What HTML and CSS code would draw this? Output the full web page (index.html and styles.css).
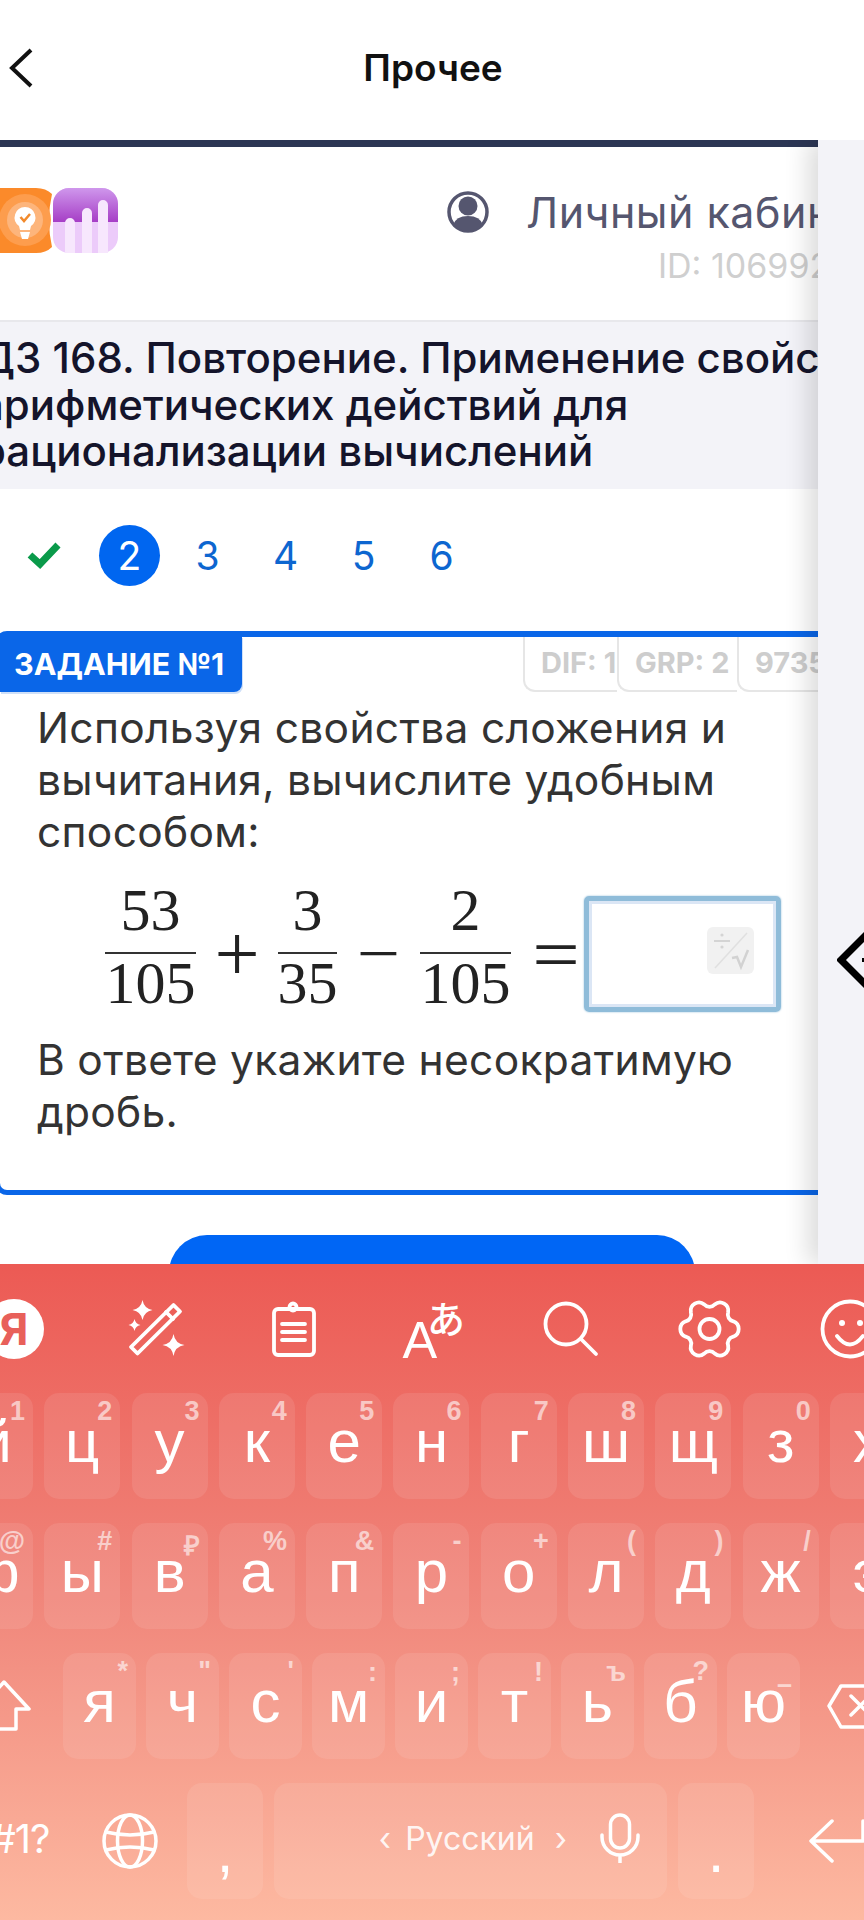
FILE: index.html
```html
<!DOCTYPE HTML>
<html lang="ru">
<head>
<meta charset="utf-8">
<title>Прочее</title>
<link rel="stylesheet" href="styles.css">
</head>
<body>

<div class="topbar">
	<svg class="back" width="32" height="44" viewBox="0 0 32 44"><path d="M29 4 L10 22 L29 40"/></svg>
	<div class="topbar-title">Прочее</div>
</div>

<div class="frame">
	<div class="content">
		<div class="site-head">
			<svg class="logos" width="118" height="65" viewBox="0 0 118 65">
				<defs>
					<linearGradient id="purple" x1="0" y1="0" x2="0" y2="1"><stop offset="0" stop-color="#cf97ec"/><stop offset="1" stop-color="#a63ec6"/></linearGradient>
				</defs>
				<path d="M-14 0 H36 Q46 0 52 6 Q46 32 52 59 Q46 65 36 65 H-14Z" fill="#fb8a2a"/>
				<circle cx="25" cy="32" r="26" fill="#fd9d4d"/>
				<circle cx="25" cy="32" r="18" fill="#fdb57c"/>
				<path d="M25 19 a10.5 10.5 0 0 1 6 19 l-1 4 h-10 l-1 -4 a10.5 10.5 0 0 1 6 -19z" fill="#fff"/>
				<path d="M20 44 h10 l-2 7 h-6z" fill="#fff"/>
				<path d="M20.5 29 l3.5 4 l6 -7" fill="none" stroke="#f28a2c" stroke-width="2.5"/>
				<rect x="53" y="0" width="65" height="65" rx="16" fill="#eccbfa"/>
				<path d="M53 34 V16 a16 16 0 0 1 16 -16 h33 a16 16 0 0 1 16 16 V34Z" fill="url(#purple)"/>
				<path d="M65 65 V35 a5 5 0 0 1 10 0 V65Z M82 65 V25 a5 5 0 0 1 10 0 V65Z M98 65 V17 a5 5 0 0 1 10 0 V65Z" fill="#f7e7fd"/>
			</svg>
			<div class="account">
				<div class="account-name">
					<svg width="42" height="44" viewBox="0 0 42 44">
						<circle cx="21" cy="22" r="19" fill="none" stroke="#55566f" stroke-width="3.5"/>
						<circle cx="21" cy="16" r="9.5" fill="#55566f"/>
						<path d="M6 35 Q9 26 21 26 Q33 26 36 35 Q29 41 21 41 Q13 41 6 35Z" fill="#55566f"/>
					</svg>
					<span>Личный кабинет</span>
				</div>
				<div class="account-id">ID: 1069925</div>
			</div>
		</div>

		<div class="lesson-title">ДЗ 168. Повторение. Применение свойств<br>арифметических действий для<br>рационализации вычислений</div>

		<div class="steps">
			<svg class="step-done" width="36" height="28" viewBox="0 0 36 28"><path d="M4 14 L14 23 L32 4"/></svg>
			<div class="step current">2</div>
			<div class="step">3</div>
			<div class="step">4</div>
			<div class="step">5</div>
			<div class="step">6</div>
		</div>

		<div class="task">
			<div class="task-head">
				<div class="task-badge">ЗАДАНИЕ №1</div>
				<div class="task-tags">
					<div class="tag tag-dif">DIF: 1</div>
					<div class="tag tag-grp">GRP: 2</div>
					<div class="tag">97351</div>
				</div>
			</div>
			<p class="task-text first">Используя свойства сложения и<br>вычитания, вычислите удобным<br>способом:</p>
			<div class="math">
				<div class="frac wide"><span>53</span><i></i><span>105</span></div>
				<span class="op op-plus">+</span>
				<div class="frac"><span>3</span><i></i><span>35</span></div>
				<span class="op op-minus">−</span>
				<div class="frac wide"><span>2</span><i></i><span>105</span></div>
				<span class="op op-eq">=</span>
				<div class="answer">
					<svg class="answer-icon" width="47" height="47" viewBox="0 0 47 47">
						<rect width="47" height="47" rx="6" fill="#f1f1f1"/>
						<path d="M40 6 L8 41" stroke="#e0e0e0" stroke-width="1.5" fill="none"/>
						<path d="M7 14 H23" stroke="#d4d4d4" stroke-width="2" fill="none"/>
						<circle cx="15" cy="8" r="1.6" fill="#d4d4d4"/>
						<circle cx="15" cy="20" r="1.6" fill="#d4d4d4"/>
						<path d="M25 31 L30 30 L34 40 L41 23" stroke="#d2d2d2" stroke-width="2.5" fill="none"/>
					</svg>
				</div>
			</div>
			<p class="task-text second">В ответе укажите несократимую<br>дробь.</p>
		</div>

		<div class="submit"></div>
	</div>
	<div class="side">
		<svg class="side-arrow" width="27" height="70" viewBox="0 0 27 70"><path d="M31 8 L4 35 L31 62"/><rect x="25" y="33" width="2" height="4"/></svg>
	</div>
</div>

<div class="keyboard">
	<div class="kb-tools">
		<div class="tool-ya">Я</div>
		<svg class="tool" viewBox="-30 -30 60 60">
			<path d="M-16.5 24.5 L26 -17.5 L19.5 -24 L-23 18Z"/>
			<path d="M12 -17 L19 -10"/>
			<path class="solid" d="M-11.5 -29 Q-10 -20.5 -1.5 -19 Q-10 -17.5 -11.5 -9 Q-13 -17.5 -21.5 -19 Q-13 -20.5 -11.5 -29Z"/>
			<path class="solid" d="M-19.5 -10 Q-18.5 -5 -13.5 -4 Q-18.5 -3 -19.5 2 Q-20.5 -3 -25.5 -4 Q-20.5 -5 -19.5 -10Z"/>
			<path class="solid" d="M19.5 5 Q21 14.5 30.5 16 Q21 17.5 19.5 27 Q18 17.5 8.5 16 Q18 14.5 19.5 5Z"/>
		</svg>
		<svg class="tool" viewBox="-30 -30 60 60">
			<rect x="-19" y="-20" width="40" height="46" rx="4"/>
			<circle cx="0" cy="-22" r="3.5"/>
			<path d="M-11 -5 H12 M-11 3 H12 M-11 11 H12"/>
		</svg>
		<svg class="tool" viewBox="-30 -30 60 60">
			<text class="tool-a" x="-30.5" y="29">A</text>
			<text class="tool-kana" x="-6" y="4">あ</text>
		</svg>
		<svg class="tool" viewBox="-30 -30 60 60">
			<circle cx="-6" cy="-5" r="20.5"/>
			<path d="M9 10 L24 25"/>
		</svg>
		<svg class="tool" viewBox="-30 -30 60 60">
			<g transform="translate(-2.5 0)">
				<path d="M23.8 -7.7 A8.2 8.2 0 0 1 23.8 7.7 A7 7 0 0 0 18.6 16.7 A8.2 8.2 0 0 1 5.2 24.5 A7 7 0 0 0 -5.2 24.5 A8.2 8.2 0 0 1 -18.6 16.7 A7 7 0 0 0 -23.8 7.7 A8.2 8.2 0 0 1 -23.8 -7.7 A7 7 0 0 0 -18.6 -16.7 A8.2 8.2 0 0 1 -5.2 -24.5 A7 7 0 0 0 5.2 -24.5 A8.2 8.2 0 0 1 18.6 -16.7 A7 7 0 0 0 23.8 -7.7Z"/>
				<circle r="10"/>
			</g>
		</svg>
		<svg class="tool" viewBox="-30 -30 60 60">
			<circle cx="-1" cy="0" r="27.5"/>
			<circle class="solid" cx="-9" cy="-6" r="3"/>
			<circle class="solid" cx="9" cy="-6" r="3"/>
			<path d="M-14 7 Q-1 24 12 7"/>
		</svg>
	</div>

	<div class="kb-rows">
		<div class="kb-row row-wide">
			<div class="key">й<b>1</b></div>
			<div class="key">ц<b>2</b></div>
			<div class="key">у<b>3</b></div>
			<div class="key">к<b>4</b></div>
			<div class="key">е<b>5</b></div>
			<div class="key">н<b>6</b></div>
			<div class="key">г<b>7</b></div>
			<div class="key">ш<b>8</b></div>
			<div class="key">щ<b>9</b></div>
			<div class="key">з<b>0</b></div>
			<div class="key">х</div>
		</div>
		<div class="kb-row row-wide">
			<div class="key">ф<b>@</b></div>
			<div class="key">ы<b>#</b></div>
			<div class="key">в<b>₽</b></div>
			<div class="key">а<b>%</b></div>
			<div class="key">п<b>&amp;</b></div>
			<div class="key">р<b>-</b></div>
			<div class="key">о<b>+</b></div>
			<div class="key">л<b>(</b></div>
			<div class="key">д<b>)</b></div>
			<div class="key">ж<b>/</b></div>
			<div class="key">э</div>
		</div>
		<div class="kb-row row-narrow">
			<div class="key-plain">
				<svg class="kb-icon" width="73" height="106" viewBox="-20 0 73 106"><path d="M4 29 L29 56 H16 V76 H-8 V56 H-21Z"/></svg>
			</div>
			<div class="key">я<b>*</b></div>
			<div class="key">ч<b>"</b></div>
			<div class="key">с<b>'</b></div>
			<div class="key">м<b class="low">:</b></div>
			<div class="key">и<b class="low">;</b></div>
			<div class="key">т<b class="low">!</b></div>
			<div class="key">ь<b class="low">ъ</b></div>
			<div class="key">б<b>?</b></div>
			<div class="key">ю<b class="lower">–</b></div>
			<div class="key-plain">
				<svg class="kb-icon" width="73" height="106" viewBox="810 1651 73 106"><path d="M829 1704 L841 1684 H890 V1725 H841Z M851 1694 L870 1713 M851 1713 L870 1694"/></svg>
			</div>
		</div>
		<div class="kb-row row-bottom">
			<div class="key-sym">!#1?</div>
			<div class="key-plain key-globe">
				<svg class="kb-icon" width="56" height="56" viewBox="-28 -28 56 56"><circle r="26"/><ellipse rx="12.5" ry="26"/><path d="M-24 -9 Q0 -3 24 -9 M-24 9 Q0 3 24 9"/></svg>
			</div>
			<div class="key key-punct">,</div>
			<div class="key key-space">
				<span class="lang"><em>‹</em>Русский<em>›</em></span>
				<svg class="kb-icon" width="40" height="50" viewBox="0 0 40 50"><rect x="10.5" y="2" width="19" height="33" rx="9.5"/><path d="M2 22 V24 A18 18 0 0 0 38 24 V22 M20 42 V50"/></svg>
			</div>
			<div class="key key-punct">.</div>
			<div class="key-plain key-enter">
				<svg class="kb-icon" width="60" height="44" viewBox="0 0 60 44"><path d="M55 2 V22 H3 M24 2 L3 22 L24 42"/></svg>
			</div>
		</div>
	</div>
</div>

</body>
</html>
```

FILE: styles.css
```css
html, body{
margin: 0;
width: 864px;
height: 1920px;
overflow: hidden;
background: #fff;
font-family: Inter, "Liberation Sans", sans-serif;
}

/* top bar */
.topbar{
height: 140px;
box-sizing: border-box;
display: flex;
align-items: center;
justify-content: center;
}
.back{
flex: none;
margin: -4px 0 0 2px;
fill: none;
stroke: #111;
stroke-width: 4;
}
.topbar-title{
flex: 1;
margin: -5px 0 0 0;
padding-right: 32px;
text-align: center;
font-size: 37px;
font-weight: 600;
color: #111;
}

.frame{
display: flex;
height: 1124px;
}
.content{
width: 818px;
flex: none;
box-sizing: border-box;
overflow: hidden;
border-top: 7px solid #2c3654;
}
.side{
flex: 1;
position: relative;
background: #f3f3f8;
box-shadow: -10px 0 24px rgba(0,0,0,.14);
clip-path: inset(0 0 0 -50px);
padding: 785px 0 0 19px;
}
.side-arrow{
display: block;
fill: none;
stroke: #000;
stroke-width: 7;
}
.side-arrow rect{
fill: #000;
stroke: none;
}

/* site header */
.site-head{
height: 173px;
display: flex;
align-items: flex-start;
white-space: nowrap;
}
.logos{
flex: none;
margin-top: 41px;
}
.account{
flex: none;
display: flex;
flex-direction: column;
align-items: flex-end;
margin: 40px 0 0 329px;
}
.account-name{
display: flex;
align-items: center;
gap: 37px;
height: 50px;
font-size: 43px;
letter-spacing: .5px;
color: #55566f;
}
.account-id{
font-size: 34px;
color: #cfcfcf;
margin: 8px 28px 0 0;
}

.lesson-title{
height: 169px;
box-sizing: border-box;
margin-left: -20px;
padding: 13px 0 0 0;
background: #f3f3f8;
border-top: 2px solid #e8e8ec;
font-size: 42px;
line-height: 46.5px;
font-weight: 500;
color: #14142b;
white-space: nowrap;
}

/* steps */
.steps{
height: 142px;
box-sizing: border-box;
display: flex;
align-items: center;
gap: 17px;
padding: 0 0 10px 26px;
}
.step-done{
flex: none;
fill: none;
stroke: #0a9a4a;
stroke-width: 7;
margin-right: 20px;
}
.step{
flex: none;
width: 61px;
height: 61px;
line-height: 61px;
text-align: center;
border-radius: 50%;
font-size: 39px;
color: #0d66d0;
}
.step.current{
background: #0066f0;
color: #fff;
}

/* task card */
.task{
height: 564px;
box-sizing: border-box;
margin-left: -5px;
border: 6px solid #0a66e8;
border-width: 6px 0 5px 5px;
border-radius: 12px 0 0 12px;
}
.task-head{
display: flex;
height: 55px;
}
.task-badge{
flex: none;
width: 242px;
box-sizing: border-box;
padding-left: 14px;
line-height: 56px;
margin-top: -1px;
background: #0a66e8;
border-radius: 0 0 8px 0;
box-shadow: 1px 2px 0 #cfe0f8;
color: #fff;
font-size: 30.5px;
font-weight: 700;
white-space: nowrap;
}
.task-tags{
display: flex;
margin-left: 281px;
}
.tag{
flex: none;
box-sizing: border-box;
padding-left: 16px;
line-height: 52px;
border: 2px solid #e6e6e6;
border-width: 0 0 2px 2px;
border-radius: 0 0 0 12px;
font-size: 29px;
font-weight: 700;
color: #cdcdcd;
white-space: nowrap;
}
.tag-dif{
width: 94px;
}
.tag-grp{
width: 120px;
}
.task-text{
margin: 0;
padding-left: 37px;
font-size: 42.5px;
letter-spacing: .3px;
line-height: 52px;
color: #333;
white-space: nowrap;
}
.task-text.first{
margin-top: 10px;
}
.task-text.second{
margin-top: 22px;
}

/* formula */
.math{
display: flex;
align-items: center;
height: 116px;
margin-top: 38px;
padding-left: 105px;
font-family: "Liberation Serif", serif;
font-size: 60px;
color: #222;
}
.frac{
flex: none;
width: 59px;
display: flex;
flex-direction: column;
align-items: center;
padding-top: 10px;
}
.frac.wide{
width: 91px;
}
.frac span{
line-height: 60px;
height: 60px;
}
.frac span:first-child{
margin-top: -12px;
height: 48px;
line-height: 36px;
padding-bottom: 12px;
}
.frac span:last-child{
line-height: 58px;
}
.frac i{
display: block;
width: 100%;
height: 2px;
background: #333;
}
.op{
flex: none;
text-align: center;
line-height: 1;
}
.op-plus{
width: 82px;
font-size: 80px;
}
.op-minus{
width: 83px;
font-size: 64px;
transform: scaleX(1.2);
}
.op-eq{
width: 73px;
box-sizing: border-box;
padding-left: 15px;
font-size: 74px;
transform: scaleX(1.14);
}
.answer{
flex: none;
width: 197px;
height: 116px;
box-sizing: border-box;
display: flex;
align-items: center;
justify-content: flex-end;
padding: 0 22px 8px 0;
border: 5px solid #8fbcd9;
border-radius: 5px;
box-shadow: inset 0 0 0 3px #dbe6f5, 0 0 2px #8fbcd9;
}
.answer-icon{
display: block;
}
.submit{
width: 526px;
height: 90px;
margin: 40px 0 0 169px;
background: #0066f5;
border-radius: 38px;
}

/* keyboard */
.keyboard{
height: 656px;
overflow: hidden;
background: linear-gradient(#ec5a54, #f0857a 50%, #fdb9a1);
color: #fff;
}
.kb-tools{
height: 129px;
display: flex;
align-items: center;
gap: 79.5px;
margin-left: -16px;
}
.tool, .tool-ya{
flex: none;
width: 60px;
height: 60px;
}
.tool{
overflow: visible;
fill: none;
stroke: #fff;
stroke-width: 3.8;
stroke-linejoin: round;
stroke-linecap: round;
}
.tool .solid{
fill: #fff;
stroke: none;
}
.tool text{
fill: #fff;
stroke: none;
}
.tool-a{
font-family: "Liberation Sans", sans-serif;
font-size: 52px;
}
.tool-kana{
font-family: "Noto Sans CJK JP", sans-serif;
font-size: 38px;
font-weight: 500;
}
.tool-ya{
background: #fff;
border-radius: 50%;
color: #e8605a;
font-size: 44px;
font-weight: 700;
line-height: 60px;
text-align: center;
}
.kb-rows{
display: flex;
flex-direction: column;
gap: 24px;
}
.kb-row{
display: flex;
height: 106px;
}
.row-wide{
gap: 11.3px;
margin-left: -43px;
}
.row-wide .key{
width: 76px;
}
.row-narrow{
gap: 10px;
margin-left: -20px;
}
.row-narrow .key, .row-narrow .key-plain{
width: 73px;
}
.row-bottom{
height: 116px;
gap: 11px;
margin-left: -20px;
}
.key, .key-plain{
flex: none;
position: relative;
display: flex;
align-items: center;
justify-content: center;
border-radius: 15px;
}
.key{
box-sizing: border-box;
padding-bottom: 10px;
background: rgba(255,255,255,.09);
font-family: "Liberation Sans", sans-serif;
font-size: 60px;
}
.key b{
position: absolute;
top: 3px;
right: 8px;
font-family: "Liberation Sans", sans-serif;
font-size: 27px;
font-weight: 700;
color: rgba(255,255,255,.6);
}
.key b.low{
top: 4px;
}
.key b.lower{
top: 16px;
}
.kb-icon{
display: block;
fill: none;
stroke: #fff;
stroke-width: 3.5;
stroke-linejoin: round;
stroke-linecap: round;
flex: none;
}
.key-sym{
flex: none;
width: 92px;
box-sizing: border-box;
padding-right: 30px;
line-height: 112px;
text-align: right;
font-size: 40px;
letter-spacing: -1px;
white-space: nowrap;
}
.key-globe{
width: 93px;
}
.key-punct{
width: 76px;
padding: 20px 0 0;
font-size: 60px;
}
.key-space{
width: 393px;
justify-content: flex-end;
padding: 0 27px 6px 0;
gap: 25px;
}
.lang{
font-family: Inter, sans-serif;
font-size: 32px;
color: rgba(255,255,255,.9);
white-space: nowrap;
}
.lang em{
font-style: normal;
margin: 0 14px;
}
.lang em:last-child{
margin: 0 8px 0 20px;
}
.key-enter{
width: 100px;
margin-left: 43px;
justify-content: flex-start;
}
```
